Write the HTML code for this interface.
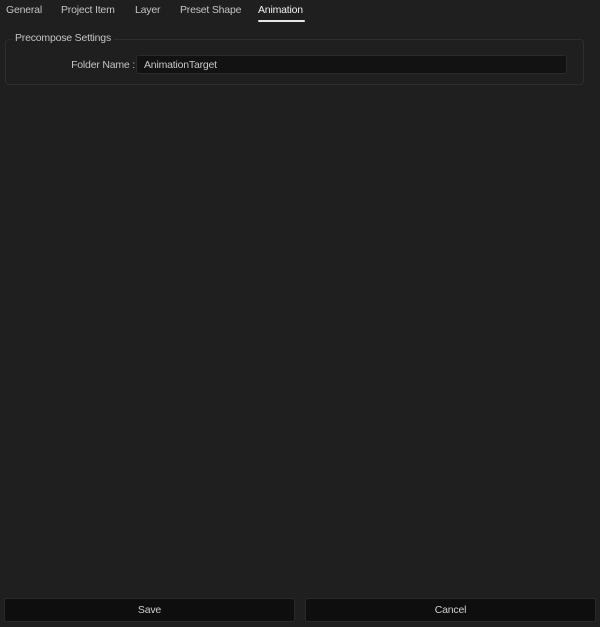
<!DOCTYPE html>
<html><head><style>
body{margin:0;width:600px;height:627px;background:#1f1f1f;font-family:"Liberation Sans",sans-serif;color:#cfcfcf;position:relative;overflow:hidden;font-size:10.5px;letter-spacing:-0.2px}
div{white-space:nowrap}
.tab{position:absolute;top:4px;color:#c4c4c4}
.fs{position:absolute;left:5px;top:39px;width:577px;height:44px;border:1px solid #2e2e2e;border-radius:4px}
.leg{position:absolute;left:12px;top:32px;background:#1f1f1f;padding:0 3px;color:#c4c4c4}
.inp{position:absolute;left:136px;top:55px;width:431px;height:19px;background:#121212;border:1px solid #2a2a2a;border-radius:3px;box-sizing:border-box;padding-left:7px;line-height:19px;color:#c8c8c8}
.btn{position:absolute;top:598px;height:24px;background:#0e0e0e;border:1px solid #2a2a2a;border-radius:3px;box-sizing:border-box;text-align:center;line-height:22px;color:#cfcfcf}
</style></head><body>
<div class="tab" style="left:6px">General</div>
<div class="tab" style="left:61px">Project Item</div>
<div class="tab" style="left:135px">Layer</div>
<div class="tab" style="left:180px">Preset Shape</div>
<div class="tab" style="left:258px;color:#f0f0f0">Animation</div>
<div style="position:absolute;left:258px;top:20px;width:47px;height:2px;background:#e8e8e8;border-radius:1px"></div>
<div class="fs"></div>
<div class="leg">Precompose Settings</div>
<div style="position:absolute;right:465px;top:59px;color:#c4c4c4">Folder Name :</div>
<div class="inp">AnimationTarget</div>
<div class="btn" style="left:4px;width:291px">Save</div>
<div class="btn" style="left:305px;width:291px">Cancel</div>
</body></html>
